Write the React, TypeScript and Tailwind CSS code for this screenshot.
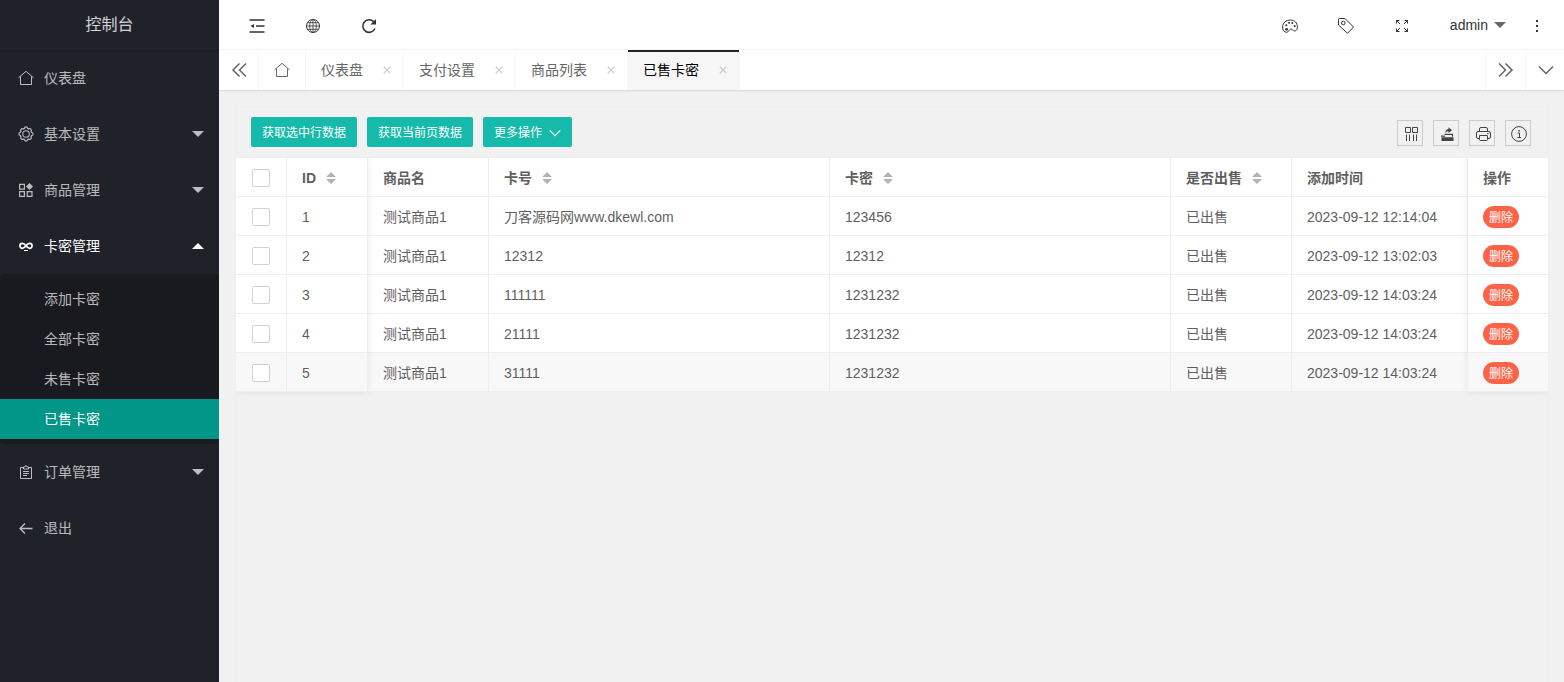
import type { ReactNode } from "react";

type IconProps = { className?: string };

function Svg({ className = "size-4", children }: IconProps & { children: ReactNode }) {
  return (
    <svg
      viewBox="0 0 16 16"
      className={`shrink-0 ${className}`}
      fill="none"
      stroke="currentColor"
      strokeWidth="1"
      aria-hidden="true"
    >
      {children}
    </svg>
  );
}

const HomeIcon = (p: IconProps) => (
  <Svg {...p}>
    <path d="M.5 7.800 8 1.300l7.500 6.500M2.500 6.500v8h11v-8" />
  </Svg>
);

const GearIcon = (p: IconProps) => (
  <Svg {...p}>
    <circle cx="8" cy="8" r="3.300" strokeWidth="1.100" />
    <path
      strokeWidth="1.200"
      d="M6.500 2.400a1.500 1.500 0 0 1 3 0l1.400.6a1.500 1.500 0 0 1 2.100 2.100l.6 1.400a1.500 1.500 0 0 1 0 3l-.6 1.400a1.500 1.500 0 0 1-2.100 2.100l-1.400.6a1.500 1.500 0 0 1-3 0L5.100 13A1.500 1.500 0 0 1 3 10.900l-.6-1.400a1.500 1.500 0 0 1 0-3L3 5.100A1.500 1.500 0 0 1 5.100 3z"
    />
  </Svg>
);

const ComponentIcon = (p: IconProps) => (
  <Svg {...p}>
    <path strokeWidth="1.200" d="M1.600 2.400h4.800v4.800H1.600zM1.600 9.600h4.800v4.800H1.600zM9.200 9.600H14v4.800H9.200z" />
    <path fill="currentColor" stroke="none" d="M11.500 1 15 4.500 11.500 8 8 4.500z" />
  </Svg>
);

const InfinityIcon = (p: IconProps) => (
  <Svg {...p}>
    <path
      strokeWidth="1.700"
      d="M8 7.800C6.800 6.100 5.700 5.300 4.400 5.300a2.500 2.500 0 0 0 0 5C5.700 10.300 6.800 9.500 8 7.800S10.300 5.300 11.600 5.300a2.500 2.500 0 0 1 0 5C10.300 10.300 9.200 9.500 8 7.800z"
    />
    <path strokeWidth="1" d="M6 12.500h4" />
  </Svg>
);

const ClipboardIcon = (p: IconProps) => (
  <Svg {...p}>
    <path d="M5 3.500H2.500v11h11v-11H11M5.500 5V3h1.300a1.200 1.200 0 0 1 2.400 0h1.300v2zM5 7.500h6M5 9.500h6M5 11.500h4" />
  </Svg>
);

const ArrowLeftIcon = (p: IconProps) => (
  <Svg {...p}>
    <path strokeWidth="1.400" d="M14.500 8.500H2M7 3.500l-5 5 5 5" />
  </Svg>
);

const ShrinkIcon = (p: IconProps) => (
  <Svg {...p}>
    <path strokeWidth="1.500" d="M.5 2h15M7 8h8.500M.5 14h15" />
    <path fill="currentColor" stroke="none" d="M1.500 8 5 6v4z" />
  </Svg>
);

const GlobeIcon = (p: IconProps) => (
  <Svg {...p}>
    <circle cx="8" cy="8" r="6.500" />
    <g strokeWidth=".8">
      <ellipse cx="8" cy="8" rx="3.300" ry="6.500" />
      <path d="M8 1.500v13M1.500 8h13M2.300 4.700h11.400M2.300 11.300h11.400" />
    </g>
  </Svg>
);

const RefreshIcon = (p: IconProps) => (
  <Svg {...p}>
    <path strokeWidth="1.600" d="M13.900 10.500A6.300 6.300 0 1 1 12.600 3.600" />
    <path fill="currentColor" stroke="none" d="M15 1v5.600H9.400z" />
  </Svg>
);

const PaletteIcon = (p: IconProps) => (
  <Svg {...p}>
    <path d="M8.500 2C4 2 .6 5 .6 9c0 3 1.700 5.300 3.900 5.300 2.300 0 2.200-2.800 4.200-3.200 1.600-.3 2.300 1.900 4 1.900 1.600 0 2.700-1.800 2.700-4.100C15.400 5 12.700 2 8.500 2z" />
    <circle cx="4.600" cy="11.300" r="1.400" fill="currentColor" stroke="none" />
    <circle cx="4.300" cy="7.300" r="1" fill="currentColor" stroke="none" />
    <circle cx="7" cy="4.800" r="1" fill="currentColor" stroke="none" />
    <circle cx="10.300" cy="5" r="1" fill="currentColor" stroke="none" />
    <circle cx="12.700" cy="7.900" r="1" fill="currentColor" stroke="none" />
  </Svg>
);

const TagIcon = (p: IconProps) => (
  <Svg {...p}>
    <path d="M1.400.5H7L15.500 9l-6 6.300L.5 7V1.400A.9.9 0 0 1 1.400.5z" />
    <circle cx="5.300" cy="5" r="1.800" />
  </Svg>
);

const FullscreenIcon = (p: IconProps) => (
  <Svg {...p}>
    <path d="M2.500 5.500v-3h3M10.500 2.500h3v3M13.500 10.500v3h-3M5.500 13.500h-3v-3M2.500 2.500l3.500 3.500M13.500 2.500 10 6M13.500 13.500 10 10M2.500 13.500 6 10" />
  </Svg>
);

const MoreIcon = (p: IconProps) => (
  <Svg {...p}>
    <path fill="currentColor" stroke="none" d="M7 2h2v2H7zM7 7h2v2H7zM7 12h2v2H7z" />
  </Svg>
);

const DoubleLeftIcon = (p: IconProps) => (
  <Svg {...p}>
    <path strokeWidth="1.500" d="M8.500 1.500 2 8l6.500 6.500M15 1.500 8.500 8l6.500 6.500" />
  </Svg>
);

const DoubleRightIcon = (p: IconProps) => (
  <Svg {...p}>
    <path strokeWidth="1.500" d="M7.500 1.500 14 8l-6.500 6.500M1 1.500 7.500 8 1 14.500" />
  </Svg>
);

const ChevronDownIcon = (p: IconProps) => (
  <Svg {...p}>
    <path strokeWidth="1.500" d="m1 4.500 7 7 7-7" />
  </Svg>
);

const CloseIcon = (p: IconProps) => (
  <Svg {...p}>
    <path strokeWidth="2.200" d="m1.500 1.500 13 13M14.500 1.500l-13 13" />
  </Svg>
);

const ColumnsIcon = (p: IconProps) => (
  <Svg {...p}>
    <path d="M2.500 1.500h5v5h-5zM9.500 1.500h5v5h-5zM3.500 8.500V15M6.500 8.500V15M10.500 8.500V15M13.500 8.500V15" />
  </Svg>
);

const ExportIcon = (p: IconProps) => (
  <Svg {...p}>
    <path
      fill="currentColor"
      stroke="none"
      d="M2.500 11.300h12V15h-12zM2 9.500h3.500l1 1.200H2zM9.500 1.300 13 4.200l-3.500 2.900V5.300C7.800 5.300 6.800 6.200 6.500 7.500 6 5.200 7.200 3.300 9.500 3.100z"
    />
    <path strokeWidth="1.200" d="M5.500 8.300h8v2.500" />
  </Svg>
);

const PrintIcon = (p: IconProps) => (
  <Svg {...p}>
    <path d="M4.500 5.500V3A1.500 1.500 0 0 1 6 1.500h5A1.500 1.500 0 0 1 12.500 3v2.500M4 12.500H3A1.500 1.500 0 0 1 1.500 11V7A1.500 1.500 0 0 1 3 5.500h11A1.500 1.500 0 0 1 15.500 7v4a1.500 1.500 0 0 1-1.500 1.500h-1M4.500 9.500h8v4a1 1 0 0 1-1 1h-6a1 1 0 0 1-1-1zM12 7.500h1.500" />
  </Svg>
);

const InfoIcon = (p: IconProps) => (
  <Svg {...p}>
    <circle cx="8" cy="8" r="7.400" />
    <path d="M6.500 7h2v4.500M6.500 11.500h3.500" />
    <path fill="currentColor" stroke="none" d="M7.300 4h1.500v1.500H7.300z" />
  </Svg>
);

function Caret({ up = false }: { up?: boolean }) {
  return (
    <svg viewBox="0 0 12 6" className="h-1.5 w-3 shrink-0" fill="currentColor" aria-hidden="true">
      <path d={up ? "M0 6h12L6 0z" : "M0 0h12L6 6z"} />
    </svg>
  );
}

function SortIcon() {
  return (
    <svg viewBox="0 0 10 12" className="h-3 w-2.5 shrink-0 text-[#b2b2b2]" fill="currentColor" aria-hidden="true">
      <path d="M0 5h10L5 0zM0 7h10l-5 5z" />
    </svg>
  );
}

type MenuEntry = {
  label: string;
  icon: (p: IconProps) => ReactNode;
  expandable?: boolean;
  children?: string[];
};

const menu: MenuEntry[] = [
  { label: "仪表盘", icon: HomeIcon },
  { label: "基本设置", icon: GearIcon, expandable: true },
  { label: "商品管理", icon: ComponentIcon, expandable: true },
  {
    label: "卡密管理",
    icon: InfinityIcon,
    expandable: true,
    children: ["添加卡密", "全部卡密", "未售卡密", "已售卡密"],
  },
  { label: "订单管理", icon: ClipboardIcon, expandable: true },
  { label: "退出", icon: ArrowLeftIcon },
];

function Sidebar() {
  return (
    <aside className="w-[219px] shrink-0 bg-[#20222a] text-white/70">
      <h1 className="flex h-[50px] items-center justify-center text-base text-white/80 shadow-[0_1px_2px_rgba(0,0,0,0.15)]">
        控制台
      </h1>
      <nav>
        <ul>
          {menu.map(({ label, icon: Icon, expandable, children }) => (
            <li key={label}>
              <a
                href="#"
                className={`flex h-14 items-center pr-[15px] pl-[18px] ${children ? "text-white" : ""}`}
              >
                <Icon />
                <span className="ml-2.5 flex-1">{label}</span>
                {expandable && <Caret up={!!children} />}
              </a>
              {children && (
                <ul className="rounded-sm bg-[#181a1f] py-[5px]">
                  {children.map((child) => (
                    <li key={child}>
                      <a
                        href="#"
                        className={`flex h-10 items-center pl-11 ${child === "已售卡密" ? "bg-[#009688] text-white" : ""}`}
                      >
                        {child}
                      </a>
                    </li>
                  ))}
                </ul>
              )}
            </li>
          ))}
        </ul>
      </nav>
    </aside>
  );
}

function HeaderButton({ label, children }: { label: string; children: ReactNode }) {
  return (
    <button type="button" aria-label={label} className="flex h-full w-14 items-center justify-center">
      {children}
    </button>
  );
}

function Header() {
  return (
    <header className="flex h-[50px] items-center justify-between border-b border-[#f6f6f6] bg-white pr-[7px] pl-2.5 text-[#333]">
      <div className="flex h-full pt-0.5">
        <HeaderButton label="侧边伸缩">
          <ShrinkIcon />
        </HeaderButton>
        <HeaderButton label="前台">
          <GlobeIcon />
        </HeaderButton>
        <HeaderButton label="刷新">
          <RefreshIcon />
        </HeaderButton>
      </div>
      <div className="flex h-full items-center">
        <div className="flex h-full pt-0.5">
          <HeaderButton label="主题">
            <PaletteIcon />
          </HeaderButton>
          <HeaderButton label="便签">
            <TagIcon />
          </HeaderButton>
          <HeaderButton label="全屏">
            <FullscreenIcon />
          </HeaderButton>
        </div>
        <button type="button" className="flex h-full items-center gap-1.5 pr-[11px] pl-5">
          admin
          <span className="text-[#666]">
            <Caret />
          </span>
        </button>
        <button type="button" aria-label="更多" className="flex h-full w-10 items-center justify-center pt-0.5">
          <MoreIcon />
        </button>
      </div>
    </header>
  );
}

const tabs = ["仪表盘", "支付设置", "商品列表", "已售卡密"];

function TabBar() {
  return (
    <div className="relative flex h-10 bg-white text-[#666] shadow-[0_1px_2px_rgba(0,0,0,0.1)]">
      <button type="button" aria-label="向左" className="flex w-10 items-center justify-center border-r border-[#f6f6f6]">
        <DoubleLeftIcon />
      </button>
      <a href="#" aria-label="主页" className="flex items-center border-r border-[#f6f6f6] px-[15px]">
        <HomeIcon />
      </a>
      {tabs.map((tab) => {
        const active = tab === "已售卡密";
        return (
          <div
            key={tab}
            className={`relative flex items-center border-r border-[#f6f6f6] pr-[9px] pl-[15px] ${active ? "bg-[#f6f6f6] text-black" : ""}`}
          >
            {active && <span className="absolute inset-x-0 top-0 h-0.5 bg-[#20222a]" />}
            <a href="#">{tab}</a>
            <button
              type="button"
              aria-label={`关闭${tab}`}
              className="ml-[17px] flex size-3.5 items-center justify-center text-[#ccc]"
            >
              <CloseIcon className="size-2" />
            </button>
          </div>
        );
      })}
      <button
        type="button"
        aria-label="向右"
        className="ml-auto flex w-10 items-center justify-center border-l border-[#f6f6f6]"
      >
        <DoubleRightIcon />
      </button>
      <button
        type="button"
        aria-label="标签操作"
        className="flex w-[39px] items-center justify-end border-l border-[#f6f6f6] pr-2.5"
      >
        <ChevronDownIcon />
      </button>
    </div>
  );
}

function ToolButton({ label, children }: { label: string; children: ReactNode }) {
  return (
    <button
      type="button"
      aria-label={label}
      className="flex size-[26px] items-center justify-end border border-[#ccc] pt-px pr-[3px] text-[#444]"
    >
      {children}
    </button>
  );
}

const actionClass =
  "flex h-[30px] items-center rounded-xs bg-[#16baaa] px-[11px] pt-px text-xs whitespace-nowrap text-white";

function Toolbar() {
  return (
    <div className="flex h-[51px] items-center justify-between border-b border-[#eee] pr-[17px] pl-[15px]">
      <div className="flex gap-2.5">
        <button type="button" className={actionClass}>
          获取选中行数据
        </button>
        <button type="button" className={actionClass}>
          获取当前页数据
        </button>
        <button type="button" className={`${actionClass} gap-[7px]`}>
          更多操作
          <ChevronDownIcon className="size-3" />
        </button>
      </div>
      <div className="flex gap-2.5 pt-0.5">
        <ToolButton label="筛选列">
          <ColumnsIcon />
        </ToolButton>
        <ToolButton label="导出">
          <ExportIcon />
        </ToolButton>
        <ToolButton label="打印">
          <PrintIcon />
        </ToolButton>
        <ToolButton label="提示">
          <InfoIcon />
        </ToolButton>
      </div>
    </div>
  );
}

const columns = [
  { title: "ID", sortable: true },
  { title: "商品名", sortable: false },
  { title: "卡号", sortable: true },
  { title: "卡密", sortable: true },
  { title: "是否出售", sortable: true },
  { title: "添加时间", sortable: false },
  { title: "操作", sortable: false },
];

const rows = [
  { id: 1, card: "刀客源码网www.dkewl.com", secret: "123456", time: "2023-09-12 12:14:04" },
  { id: 2, card: "12312", secret: "12312", time: "2023-09-12 13:02:03" },
  { id: 3, card: "111111", secret: "1231232", time: "2023-09-12 14:03:24" },
  { id: 4, card: "21111", secret: "1231232", time: "2023-09-12 14:03:24" },
  { id: 5, card: "31111", secret: "1231232", time: "2023-09-12 14:03:24" },
];

function Checkbox({ label }: { label: string }) {
  return (
    <input
      type="checkbox"
      aria-label={label}
      className="mx-auto block size-[18px] appearance-none rounded-xs border border-[#d2d2d2] bg-white checked:bg-[#16baaa]"
    />
  );
}

const checkCell = "border-r border-b border-[#eee] pt-0.5";
const cell = "border-r border-b border-[#eee] px-[15px] pt-0.5";

function DataTable() {
  return (
    <div className="relative">
      <table className="w-full table-fixed border-separate border-spacing-0 bg-white text-left">
        <colgroup>
          <col className="w-[51px]" />
          <col className="w-[81px]" />
          <col className="w-[121px]" />
          <col />
          <col />
          <col className="w-[121px]" />
          <col className="w-[176px]" />
          <col className="w-[80px]" />
        </colgroup>
        <thead>
          <tr className="h-[39px]">
            <th className={checkCell}>
              <Checkbox label="全选" />
            </th>
            {columns.map(({ title, sortable }) => (
              <th key={title} className={`${cell} font-semibold whitespace-nowrap last:border-r-0`}>
                <span className="flex items-center gap-2.5">
                  {title}
                  {sortable && <SortIcon />}
                </span>
              </th>
            ))}
          </tr>
        </thead>
        <tbody>
          {rows.map((row) => (
            <tr key={row.id} className="h-[39px] last:bg-[#f8f8f8]">
              <td className={checkCell}>
                <Checkbox label={`选择第${row.id}行`} />
              </td>
              <td className={cell}>{row.id}</td>
              <td className={cell}>测试商品1</td>
              <td className={cell}>{row.card}</td>
              <td className={cell}>{row.secret}</td>
              <td className={cell}>已出售</td>
              <td className={`${cell} whitespace-nowrap`}>{row.time}</td>
              <td className="border-b border-[#eee] px-[15px] pt-0.5">
                <button
                  type="button"
                  className="flex h-[22px] items-center rounded-full bg-[#ff6347] px-1.5 pt-px text-xs whitespace-nowrap text-white"
                >
                  删除
                </button>
              </td>
            </tr>
          ))}
        </tbody>
      </table>
      <div className="pointer-events-none absolute inset-y-0 left-0 w-[132px] shadow-[0_0_8px_rgba(0,0,0,0.08)] [clip-path:inset(0_-10px_-10px_0)]" />
      <div className="pointer-events-none absolute inset-y-0 right-0 w-[81px] shadow-[0_0_8px_rgba(0,0,0,0.08)] [clip-path:inset(0_0_-10px_-10px)]" />
    </div>
  );
}

export default function App() {
  return (
    <div className="flex min-h-screen bg-[#f1f1f1] font-['Liberation_Sans','Noto_Sans_CJK_SC',sans-serif] text-sm text-[#5f5f5f]">
      <Sidebar />
      <div className="flex min-w-0 flex-1 flex-col">
        <Header />
        <TabBar />
        <main className="flex flex-1 flex-col pt-4 pr-[15px] pl-4">
          <section className="flex-1 border-x border-t border-[#eee]">
            <Toolbar />
            <DataTable />
          </section>
        </main>
      </div>
    </div>
  );
}
